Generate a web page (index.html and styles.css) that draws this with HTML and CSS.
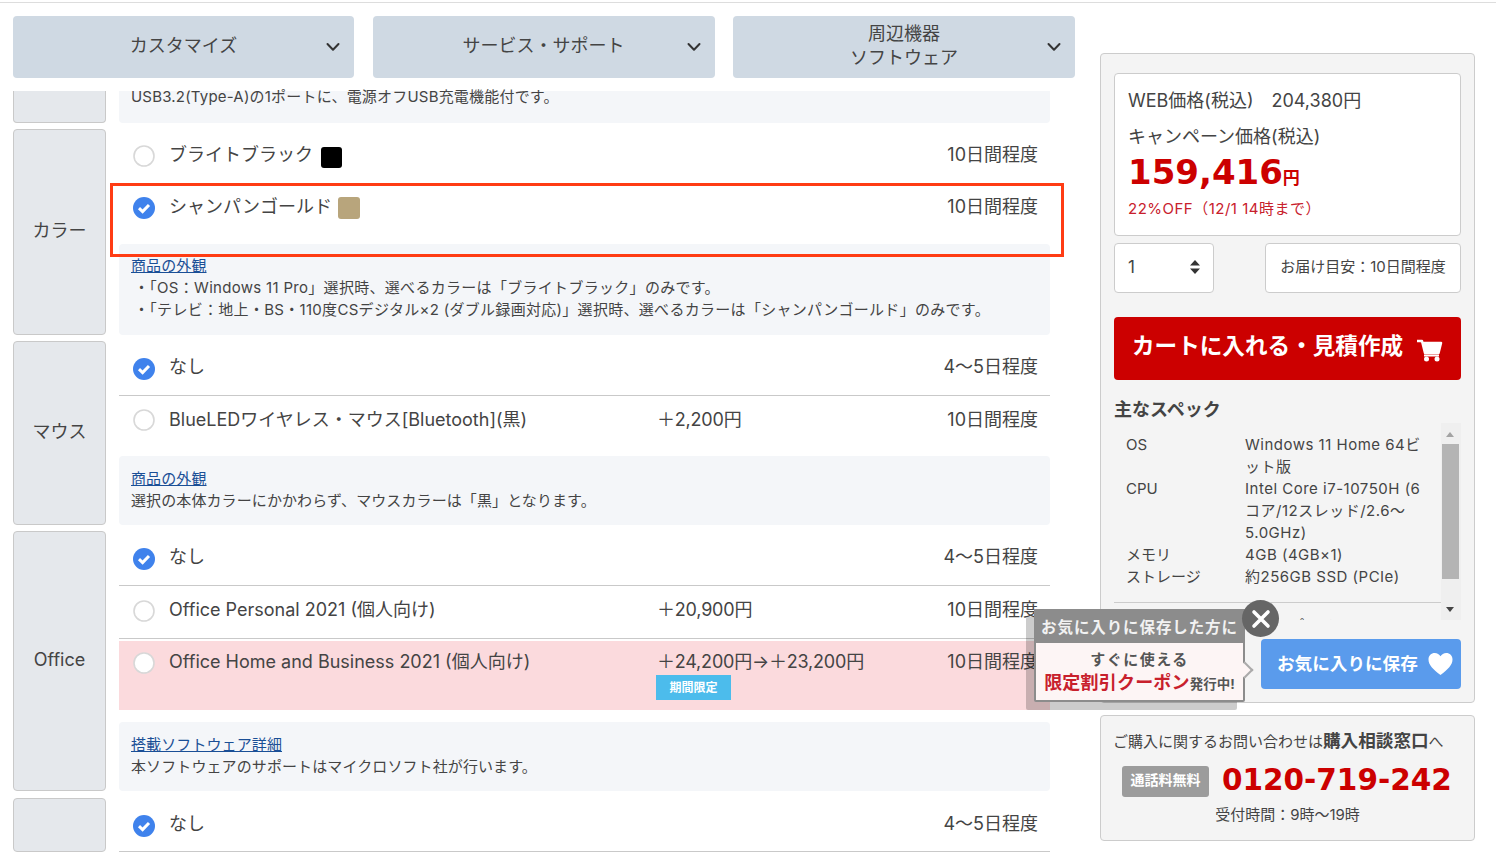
FILE: index.html
```html
<!DOCTYPE html>
<html lang="ja">
<head>
<meta charset="utf-8">
<title>カスタマイズ</title>
<link rel="stylesheet" href="styles.css">
</head>
<body>
<svg class="defs" width="0" height="0" aria-hidden="true">
  <symbol id="chev" viewBox="0 0 14 10"><path d="M1.5 2 7 7.7 12.5 2" fill="none" stroke="#333" stroke-width="2" stroke-linecap="round" stroke-linejoin="round"/></symbol>
  <symbol id="on" viewBox="0 0 22 22"><circle cx="11" cy="11" r="11" fill="#3f82ec"/><path d="M6 11.2 9.6 14.6 16 8" fill="none" stroke="#fff" stroke-width="3"/></symbol>
  <symbol id="off" viewBox="0 0 22 22"><circle cx="11" cy="11" r="10" fill="#fff" stroke="#d8d8d8" stroke-width="1.6"/></symbol>
</svg>
<div class="topline"></div>
<div class="page">
  <div class="left">
    <nav class="tabs">
      <div class="tab"><span>カスタマイズ</span><svg class="chev"><use href="#chev"/></svg></div>
      <div class="tab"><span>サービス・サポート</span><svg class="chev"><use href="#chev"/></svg></div>
      <div class="tab"><span>周辺機器<br>ソフトウェア</span><svg class="chev"><use href="#chev"/></svg></div>
    </nav>
    <main class="sections">
      <section class="sec h32">
        <div class="label"></div>
        <div class="body"><div class="note clipped">USB3.2(Type-A)の1ポートに、電源オフUSB充電機能付です。</div></div>
      </section>
      <section class="sec">
        <div class="label">カラー</div>
        <div class="body">
          <div class="opt first"><svg class="radio"><use href="#off"/></svg><span class="name">ブライトブラック<i class="swatch black"></i></span><span class="price"></span><span class="days">10日間程度</span></div>
          <div class="opt second"><svg class="radio"><use href="#on"/></svg><span class="name">シャンパンゴールド<i class="swatch gold"></i></span><span class="price"></span><span class="days">10日間程度</span></div>
          <div class="note color-note"><a href="#">商品の外観</a><br><span class="ind">・「OS：Windows 11 Pro」選択時、選べるカラーは「ブライトブラック」のみです。</span><br><span class="ind">・「テレビ：地上・BS・110度CSデジタル×2 (ダブル録画対応)」選択時、選べるカラーは「シャンパンゴールド」のみです。</span></div>
        </div>
      </section>
      <section class="sec">
        <div class="label">マウス</div>
        <div class="body">
          <div class="opt top line"><svg class="radio"><use href="#on"/></svg><span class="name">なし</span><span class="price"></span><span class="days">4～5日程度</span></div>
          <div class="opt mid tall"><svg class="radio"><use href="#off"/></svg><span class="name">BlueLEDワイヤレス・マウス[Bluetooth](黒)</span><span class="price">＋2,200円</span><span class="days">10日間程度</span></div>
          <div class="note"><a href="#">商品の外観</a><br>選択の本体カラーにかかわらず、マウスカラーは「黒」となります。</div>
        </div>
      </section>
      <section class="sec">
        <div class="label lat">Office</div>
        <div class="body">
          <div class="opt top line"><svg class="radio"><use href="#on"/></svg><span class="name">なし</span><span class="price"></span><span class="days">4～5日程度</span></div>
          <div class="opt mid line"><svg class="radio"><use href="#off"/></svg><span class="name">Office Personal 2021 (個人向け)</span><span class="price">＋20,900円</span><span class="days">10日間程度</span></div>
          <div class="opt pink"><svg class="radio"><use href="#off"/></svg><span class="name">Office Home and Business 2021 (個人向け)</span><span class="price">＋24,200円→＋23,200円<b class="limited">期間限定</b></span><span class="days">10日間程度</span></div>
          <div class="note"><a href="#">搭載ソフトウェア詳細</a><br>本ソフトウェアのサポートはマイクロソフト社が行います。</div>
        </div>
      </section>
      <section class="sec last">
        <div class="label"></div>
        <div class="body">
          <div class="opt top line"><svg class="radio"><use href="#on"/></svg><span class="name">なし</span><span class="price"></span><span class="days">4～5日程度</span></div>
        </div>
      </section>
    </main>
  </div>
  <aside class="side">
    <div class="card buy">
      <div class="pricebox">
        <div class="web">WEB価格(税込)　204,380円</div>
        <div class="camp">キャンペーン価格(税込)</div>
        <div class="bigprice">159,416<small>円</small></div>
        <div class="off">22%OFF（12/1 14時まで）</div>
      </div>
      <div class="qtyrow">
        <div class="qty"><span>1</span><svg width="12" height="16" viewBox="0 0 12 16"><path d="M6 1 11 6.5H1zM6 15 1 9.5H11z" fill="#333"/></svg></div>
        <div class="eta">お届け目安：10日間程度</div>
      </div>
      <a class="cart" href="#">カートに入れる・見積作成<svg width="28" height="24" viewBox="0 0 28 24"><path d="M1 3H6L9 15H22.500L25 5H7.500" fill="#fff" stroke="#fff" stroke-width="2.500" stroke-linejoin="round"/><path d="M8 17.500H23" stroke="#fff" stroke-width="2"/><circle cx="10.500" cy="21" r="2.500" fill="#fff"/><circle cx="21" cy="21" r="2.500" fill="#fff"/></svg></a>
      <h3 class="spec-h">主なスペック</h3>
      <div class="specs">
        <div class="spec-body">
          <dl class="spec-list">
            <dt>OS</dt><dd>Windows 11 Home 64ビット版</dd>
            <dt>CPU</dt><dd>Intel Core i7-10750H (6コア/12スレッド/2.6～5.0GHz)</dd>
            <dt>メモリ</dt><dd>4GB (4GB×1)</dd>
            <dt>ストレージ</dt><dd>約256GB SSD (PCIe)</dd>
          </dl>
          <div class="spec-more">ディスプレイ</div>
        </div>
        <div class="sbar"><i class="up"></i><i class="thumb"></i><i class="down"></i></div>
      </div>
      <a class="fav" href="#">お気に入りに保存<svg width="27" height="24" viewBox="0 0 28 26"><path d="M14 25C6 18.500 1 14 1 8C1 3.800 4 1 7.800 1C10.500 1 12.700 2.400 14 4.700C15.300 2.400 17.500 1 20.200 1C24 1 27 3.800 27 8C27 14 22 18.500 14 25Z" fill="#fff"/></svg></a>
    </div>
    <div class="card contact">
      <div class="c1">ご購入に関するお問い合わせは<b>購入相談窓口</b>へ</div>
      <div class="c2"><span class="free">通話料無料</span><span class="tel">0120-719-242</span></div>
      <div class="c3">受付時間：9時～19時</div>
    </div>
  </aside>
  <div class="highlight"></div>
  <div class="popup">
    <div class="pop-h">お気に入りに保存した方に</div>
    <div class="pop-b">
      <div class="p1">すぐに使える</div>
      <div class="p2"><b>限定割引クーポン</b><span>発行中!</span></div>
    </div>
    <i class="pop-arrow"></i>
    <div class="pop-x"><svg width="20" height="20" viewBox="0 0 20 20"><path d="M3 3 17 17M17 3 3 17" stroke="#fff" stroke-width="3.600" stroke-linecap="round"/></svg></div>
  </div>
</div>
</body>
</html>
```
FILE: styles.css
```css
* { box-sizing: border-box; }
html, body { margin: 0; padding: 0; }
body {
  height: 852px; overflow: hidden; background: #fff; color: #444;
  font-family: Inter, "Noto Sans CJK JP", sans-serif;
  font-size: 18px; font-weight: 400;
}
.defs { position: absolute; }
.topline { height: 3px; border-bottom: 1px solid #ddd; }
.page { position: relative; display: flex; align-items: flex-start; padding: 13px 0 0 13px; }
.left { width: 1062px; flex: none; }

.tabs { display: grid; grid-template-columns: 341px 342px 342px; gap: 18.500px; height: 62px; }
.tab { position: relative; display: flex; align-items: center; justify-content: center; background: #cfd9e3; border-radius: 4px; text-align: center; line-height: 24px; color: #444; padding-bottom: 3px; }
.chev { position: absolute; right: 14px; top: 26px; width: 14px; height: 10px; }

.sections { margin-top: 13px; width: 1037px; display: flex; flex-direction: column; gap: 6px; }
.sec { display: grid; grid-template-columns: 93px 931px; column-gap: 13px; }
.sec.last { margin-top: 1px; }
.h32 { height: 32px; }
.label { background: #e5e8ec; border: 1px solid #c9c9c9; border-radius: 4px; display: flex; align-items: center; justify-content: center; padding-bottom: 7px; }
.label.lat { padding-bottom: 3px; }
.h32 .label { border-top: 0; border-radius: 0 0 4px 4px; }
.body { min-width: 0; }
.note { background: #f4f6f9; border-radius: 4px; padding: 12px 12px 12px; font-size: 15px; line-height: 22px; height: 69px; letter-spacing: .1px; }
.note a { color: #1a4f96; }
.clipped { height: 32px; padding-top: 0; line-height: 12px; letter-spacing: .2px; border-radius: 0 0 4px 4px; }
.color-note { height: 91px; padding-top: 11px; }
.ind { display: inline-block; padding-left: 3px; letter-spacing: .3px; }

.opt { display: flex; align-items: flex-start; padding: 0 12px 0 14px; height: 53px; border-bottom: 1px solid transparent; --text-top: 11px; --radio-top: 14px; }
.opt.line { border-bottom-color: #c9c9c9; }
.radio { width: 22px; height: 22px; flex: none; margin-top: var(--radio-top); }
.name { width: 488px; margin-left: 14px; margin-top: var(--text-top); line-height: 26px; white-space: nowrap; flex: none; }
.price { width: 280px; margin-top: var(--text-top); line-height: 26px; white-space: nowrap; flex: none; position: relative; letter-spacing: -.2px; }
.days { margin-left: auto; margin-top: var(--text-top); line-height: 26px; white-space: nowrap; }
.swatch { display: inline-block; width: 21px; height: 21px; border-radius: 3px; margin-left: 8px; vertical-align: -7px; }
.black { background: #000; }
.gold { background: #b8a57c; width: 22px; height: 22px; margin-left: 6px; vertical-align: -6px; }
.first { height: 54px; --text-top: 13px; --radio-top: 16px; }
.second { height: 61px; --text-top: 11px; --radio-top: 14px; }
.top { height: 55px; --text-top: 13px; --radio-top: 17px; }
.last .top { height: 54px; }
.mid { --text-top: 11px; --radio-top: 14px; }
.tall { height: 60px; --radio-top: 13px; }
.pink { background: #fbdadd; height: 69px; margin-top: 2px; margin-bottom: 12px; --text-top: 8px; --radio-top: 11px; }
.limited { display: block; position: absolute; left: -1px; top: 26px; width: 75px; height: 25px; background: #4cbcec; color: #fff; font-size: 12px; font-weight: 700; line-height: 25px; text-align: center; letter-spacing: 0; }

.side { width: 375px; flex: none; margin-left: 25px; margin-top: 37px; display: flex; flex-direction: column; gap: 12px; }
.card { background: #f4f4f4; border: 1px solid #ccc; border-radius: 4px; }
.buy { height: 650px; padding: 19px 13px 0; }
.pricebox { height: 163px; background: #fff; border: 1px solid #ccc; border-radius: 4px; padding: 14px 13px 0; }
.web { line-height: 26px; }
.camp { line-height: 26px; margin-top: 10px; }
.bigprice { font-family: "DejaVu Sans", sans-serif; font-weight: 700; font-size: 34px; line-height: 44px; color: #c00; margin-top: 0; }
.bigprice small { font-family: "Noto Sans CJK JP", sans-serif; font-size: 17px; }
.off { color: #c8202c; font-size: 15px; line-height: 20px; letter-spacing: .5px; }

.qtyrow { display: flex; justify-content: space-between; margin-top: 7px; height: 50px; }
.qty { width: 100px; background: #fff; border: 1px solid #ccc; border-radius: 4px; display: flex; align-items: center; justify-content: space-between; padding: 0 12px 2px 13px; font-size: 17px; }
.eta { width: 196px; background: #fff; border: 1px solid #ccc; border-radius: 4px; display: flex; align-items: center; justify-content: center; font-size: 15px; padding-bottom: 6px; }

.cart { display: flex; align-items: center; height: 63px; margin-top: 24px; background: #c00; border-radius: 4px; color: #fff; text-decoration: none; font-size: 22.600px; font-weight: 700; padding: 0 0 8px 18px; white-space: nowrap; }
.cart svg { margin-left: 13px; margin-top: 10px; }
.spec-h { margin: 18px 0 0; font-size: 18px; font-weight: 700; line-height: 24px; color: #444; }
.specs { display: flex; margin-top: 1px; height: 197px; overflow: hidden; }
.spec-body { width: 327px; flex: none; padding-top: 11px; height: 197px; overflow: hidden; }
.spec-list { display: grid; grid-template-columns: 119px 1fr; margin: 0; padding: 0 12px; font-size: 15px; line-height: 22px; }
.spec-list dt, .spec-list dd { margin: 0; }
.spec-list dd { letter-spacing: .5px; }
.spec-more { margin-top: 14px; border-top: 1px solid #ccc; font-size: 15px; line-height: 22px; padding: 12px 0 0 131px; height: 40px; }
.sbar { width: 20px; background: #efefef; position: relative; }
.thumb { position: absolute; left: 1px; right: 2px; top: 21px; height: 135px; background: #b4b4b4; }
.up, .down { position: absolute; left: 5px; width: 0; height: 0; border-left: 4.500px solid transparent; border-right: 4.500px solid transparent; }
.up { top: 9px; border-bottom: 5px solid #a3a3a3; }
.down { bottom: 8px; border-top: 5px solid #444; }
.fav { display: flex; align-items: center; width: 200px; height: 50px; margin: 19px 0 0 147px; background: #5a9bec; border-radius: 4px; color: #fff; text-decoration: none; font-weight: 700; font-size: 17.600px; padding: 0 0 4px 16px; white-space: nowrap; }
.fav svg { margin-left: 9px; margin-top: 4px; }

.contact { height: 126px; padding: 13px 12px 0; text-align: center; }
.c1 { font-size: 15px; line-height: 24px; text-align: left; white-space: nowrap; }
.c1 b { font-size: 17.600px; }
.c2 { display: flex; align-items: center; margin: 10px 0 0 9px; height: 34px; }
.free { width: 87px; height: 31px; background: #9c9c9c; border-radius: 3px; color: #fff; font-size: 14px; font-weight: 700; line-height: 27px; text-align: center; flex: none; }
.tel { font-family: "DejaVu Sans", sans-serif; font-size: 29.500px; font-weight: 700; color: #c00; margin-left: 13px; padding-bottom: 2px; white-space: nowrap; }
.c3 { font-size: 15px; line-height: 22px; margin-top: 6px; }

.highlight { position: absolute; left: 110px; top: 180px; width: 954px; height: 74px; border: 3px solid #ff3c14; pointer-events: none; }
.popup { position: absolute; left: 1034px; top: 606px; width: 211px; height: 93px; box-shadow: -8px 8px 0 rgba(0,0,0,.2); border-radius: 2px; background: #8c8c8c; padding: 0; }
.pop-h { height: 34px; background: #8c8c8c; font-size: 15.500px; font-weight: 700; line-height: 38px; text-align: center; white-space: nowrap; letter-spacing: .9px; color: #f2f2f2; }
.pop-b { height: 57px; margin: 0 2px; background: #fdf5f5; text-align: center; }
.p1 { font-size: 15px; font-weight: 700; color: #555; line-height: 27px; letter-spacing: 1.500px; padding-top: 3px; }
.p2 { line-height: 20px; white-space: nowrap; }
.p2 b { color: #c8202c; font-size: 18px; font-weight: 700; letter-spacing: .2px; }
.p2 span { color: #555; font-size: 13.500px; font-weight: 700; }
.pop-arrow { position: absolute; right: -6px; top: 55px; width: 12px; height: 12px; background: #fdf5f5; border-top: 2px solid #aaa; border-right: 2px solid #aaa; transform: rotate(45deg); }
.pop-x { position: absolute; left: 208px; top: -9px; width: 37px; height: 37px; border-radius: 50%; background: #666; display: flex; align-items: center; justify-content: center; }
```
